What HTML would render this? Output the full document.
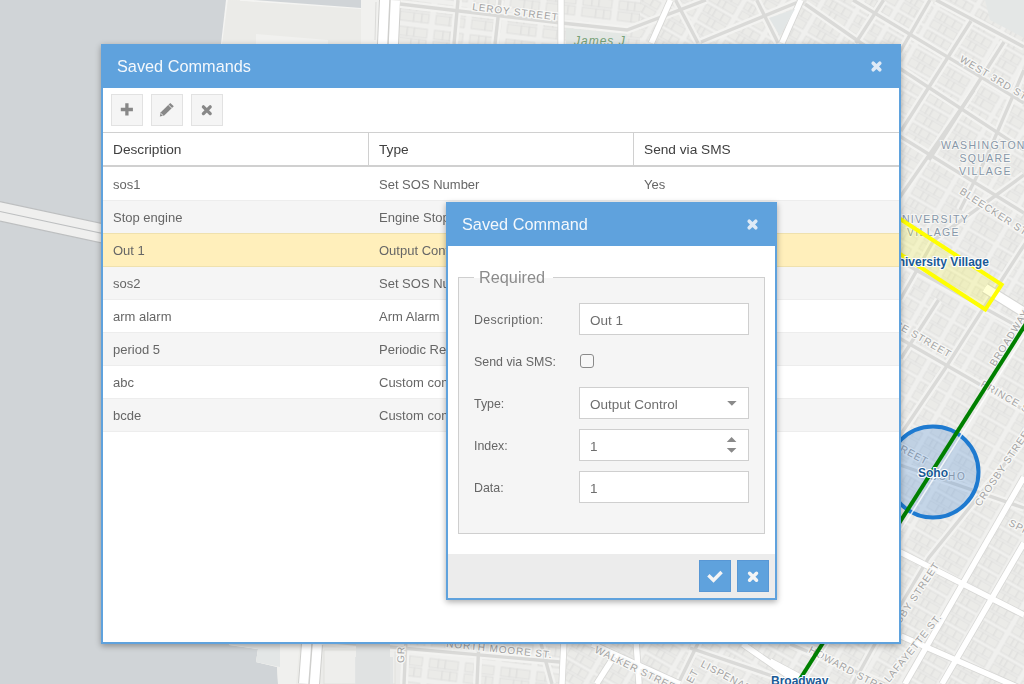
<!DOCTYPE html>
<html><head><meta charset="utf-8">
<style>
*{box-sizing:border-box;margin:0;padding:0}
html,body{width:1024px;height:684px;overflow:hidden;background:#eeeeec;font-family:"Liberation Sans",sans-serif}
#map{position:absolute;left:0;top:0;width:1024px;height:684px}
.win{position:absolute;will-change:transform;background:#fff;border:2px solid #5fa2dd;border-top:0;box-shadow:0 2px 6px rgba(0,0,0,.33)}
.hdr{position:absolute;left:-2px;right:-2px;top:0;height:44px;background:#5fa2dd}
.ttl{position:absolute;color:#f4f8fc;font-size:16.3px;white-space:nowrap;line-height:20px}
.cls{position:absolute;width:11px;height:11px;overflow:visible}
#main{left:101px;top:44px;width:800px;height:600px}
.tb{position:absolute;width:32px;height:32px;top:50px;background:#f5f5f5;border:1px solid #e2e2e2}
.tb svg{position:absolute;left:-1px;top:-1px}
.gh{position:absolute;left:0;right:0;top:88px;height:35px;border-top:1px solid #d0d0d0;border-bottom:2px solid #d0d0d0}
.col{position:absolute;top:0;height:32px;font-size:13.7px;color:#404040;line-height:34px;padding-left:10px;white-space:nowrap}
.sep{position:absolute;top:0;width:1px;height:32px;background:#d0d0d0}
.row{position:absolute;left:0;right:0;height:33px;border-top:1px solid #ededed;font-size:13px;color:#666;white-space:nowrap}
.row span{position:absolute;top:1px;line-height:32px}
.alt{background:#f5f5f5}
.sel{background:#ffefbb;border-top-color:#efe1ae}
.aft{border-top-color:#efe1ae}
.first{border-top-color:#fff}
.last{height:34px;border-bottom:1px solid #ededed}
#dlg{left:446px;top:202px;width:331px;height:398px}
.fs{position:absolute;left:10px;top:75px;width:307px;height:257px;border:1px solid #cfcfcf;background:#f5f5f5}
.lg{position:absolute;left:15px;top:-12px;padding:0 5px;background:transparent;font-size:16.3px;color:#8c8c8c;line-height:22px}
.lgbg{position:absolute;left:15px;top:-1px;width:79px;height:1px;background:#fff}
.lb{position:absolute;left:15px;font-size:12.4px;color:#666;white-space:nowrap;line-height:16px}
.fld{position:absolute;left:120px;width:170px;height:32px;background:#fff;border:1px solid #cfcfcf;font-size:13.5px;color:#6e6e6e;line-height:34px;padding-left:10px}
.ftr{position:absolute;left:0;right:0;bottom:0;height:44px;background:#ececec}
.bb{position:absolute;top:6px;width:32px;height:32px;background:#5fa2dd;border:1px solid #5897d5}
.bb svg{position:absolute;left:-1px;top:-1px}
</style></head><body>
<svg id="map" width="1024" height="684" viewBox="0 0 1024 684">
  <defs>
    <pattern id="bA" width="36" height="26" patternUnits="userSpaceOnUse" patternTransform="rotate(7)">
      <rect width="36" height="26" fill="#f0f0ee"/>
      <g fill="#ebebe8" stroke="#dcdcda" stroke-width="0.7">
        <rect x="3" y="3" width="9" height="9"/><rect x="12" y="3" width="7" height="9"/><rect x="19" y="3" width="13" height="9"/>
        <rect x="3" y="14" width="14" height="9"/><rect x="17" y="14" width="8" height="9"/><rect x="25" y="14" width="7" height="9"/>
      </g>
    </pattern>
    <pattern id="bB" width="34" height="22" patternUnits="userSpaceOnUse" patternTransform="rotate(30)">
      <rect width="34" height="22" fill="#f0f0ee"/>
      <g fill="#ebebe8" stroke="#dcdcda" stroke-width="0.7">
        <rect x="2" y="2" width="6" height="8"/><rect x="8" y="2" width="5" height="8"/><rect x="13" y="2" width="9" height="8"/><rect x="22" y="2" width="8" height="8"/>
        <rect x="2" y="12" width="10" height="8"/><rect x="12" y="12" width="6" height="8"/><rect x="18" y="12" width="12" height="8"/>
      </g>
    </pattern>
    <pattern id="bC" width="30" height="24" patternUnits="userSpaceOnUse" patternTransform="rotate(-58)">
      <rect width="30" height="24" fill="#f0f0ee"/>
      <g fill="#ebebe8" stroke="#dcdcda" stroke-width="0.7">
        <rect x="2" y="2" width="12" height="9"/><rect x="14" y="2" width="13" height="9"/>
        <rect x="2" y="13" width="7" height="9"/><rect x="9" y="13" width="9" height="9"/><rect x="18" y="13" width="9" height="9"/>
      </g>
    </pattern>
  </defs>
  <rect x="0" y="0" width="1024" height="684" fill="#ecece9"/>
  <rect x="400" y="0" width="240" height="44" fill="url(#bA)"/>
  <rect x="640" y="0" width="384" height="44" fill="url(#bB)"/>
  <rect x="880" y="0" width="144" height="684" fill="url(#bB)"/>
  <rect x="406" y="640" width="156" height="44" fill="url(#bA)"/>
  <rect x="322" y="640" width="84" height="44" fill="#ebebe9"/>
  <polygon points="324,650 362,650 362,644 395,646 395,684 324,684" fill="#eeeeec" stroke="#dcdcda" stroke-width="0.7"/>
  <polygon points="355,657 393,657 393,684 355,684" fill="#e2e4e4"/>
  <rect x="562" y="640" width="340" height="44" fill="url(#bB)"/>
  <!-- water -->
  <polygon points="0,0 227,0 222,44 215,300 229,645 258,649 256,662 277,667 278,684 0,684" fill="#d0d4d7"/>
  <polygon points="240,0 361,0 361,9" fill="#d0d4d7"/>
  <polygon points="229,645 258,649 256,662 277,667 278,684 296,684 300,640" fill="#f0f0ee"/>
  <polygon points="228,644 280,644 280,667 256,662 258,649" fill="#e3e6e6"/>
  <path d="M227,0 L222,44" stroke="#f4f4f2" stroke-width="2" fill="none"/>
  <path d="M240,0 L361,9" stroke="#f4f4f2" stroke-width="2" fill="none"/>
  <polygon points="228,0 361,9 361,44 222,44" fill="#ebebe8"/>
  <rect x="361" y="0" width="19" height="44" fill="#f1f1ef"/>
  <path d="M376,2 L375,40" stroke="#dcdcda" stroke-width="1" fill="none"/>
  <polygon points="256,34 328,40 328,44 256,44" fill="#f1f1ef"/>
  <!-- bridge left -->
  <polygon points="0,201.6 230,251 230,270.5 0,221.2" fill="#efefee"/>
  <path d="M0,201.6 L230,251 M0,211.5 L230,260.8 M0,221.2 L230,270.5" stroke="#bdbfc0" stroke-width="1.2" fill="none"/>
  <!-- highway West St -->
  <path d="M390,0 L388,44 L312,644 L309,684" stroke="#cfcfcd" stroke-width="22" fill="none"/>
  <path d="M390,0 L388,44 L312,644 L309,684" stroke="#ffffff" stroke-width="20" fill="none"/>
  <path d="M390,0 L388,44 L312,644 L309,684" stroke="#cfcfcd" stroke-width="1.5" fill="none"/>
  <!-- street casings -->
  <g stroke="#f3f3f1" stroke-width="8" fill="none" id="cas">
    <path d="M400,4 L557,22.5 L627,30 L706,0"/>
    <path d="M458,0 L454,44"/>
    <path d="M500,0 L495,44"/>
    <path d="M675.5,0 L698,43"/>
    <path d="M701,42 L797,2.5"/>
    <path d="M756.7,0 L778,43"/>
    <path d="M805,4 L861,43 L1024,150"/>
    <path d="M853,0 L1024,103"/>
    <path d="M883.6,0 L855.7,43"/>
    <path d="M936,0 L1024,47"/>
    <path d="M930,0 L880,86.5"/>
    <path d="M971,21 L901,131"/>
    <path d="M1004,42 L929,160"/>
    <path d="M1024,70 L987,156 L960,210"/>
    <path d="M974,90 L880,226"/>
    <path d="M880,124 L1024,213"/>
    <path d="M1024,175 L934,240 L900,300"/>
    <path d="M880,327 L1024,410"/>
    <path d="M1030,236 L983,309 L945.5,368 L903,431 L880,470"/>
    <path d="M938.5,300 L901,358.5"/>
    <path d="M1024,440 L928.6,558 L880,640"/>
    <path d="M880,250 L1024,330"/>
    <path d="M900,465 L1024,508"/>
    <path d="M406,640 L404,684"/>
    <path d="M479,640 L477,684"/>
    <path d="M322,641 L560,662"/>
    <path d="M699.6,640 L678,684"/>
    <path d="M690,648 L790,682"/>
    <path d="M790,644 L885,684"/>
    <path d="M876,642 L853,684"/>
    <path d="M540,640 L552,684"/>
  </g>
  <g stroke="#dadad8" stroke-width="3.4" fill="none">
    <path d="M400,4 L557,22.5 L627,30 L706,0"/>
    <path d="M458,0 L454,44"/>
    <path d="M500,0 L495,44"/>
    <path d="M675.5,0 L698,43"/>
    <path d="M701,42 L797,2.5"/>
    <path d="M756.7,0 L778,43"/>
    <path d="M805,4 L861,43 L1024,150"/>
    <path d="M853,0 L1024,103"/>
    <path d="M883.6,0 L855.7,43"/>
    <path d="M936,0 L1024,47"/>
    <path d="M930,0 L880,86.5"/>
    <path d="M971,21 L901,131"/>
    <path d="M1004,42 L929,160"/>
    <path d="M1024,70 L987,156 L960,210"/>
    <path d="M974,90 L880,226"/>
    <path d="M880,124 L1024,213"/>
    <path d="M1024,175 L934,240 L900,300"/>
    <path d="M880,327 L1024,410"/>
    <path d="M1030,236 L983,309 L945.5,368 L903,431 L880,470"/>
    <path d="M938.5,300 L901,358.5"/>
    <path d="M1024,440 L928.6,558 L880,640"/>
    <path d="M880,250 L1024,330"/>
    <path d="M900,465 L1024,508"/>
    <path d="M406,640 L404,684"/>
    <path d="M479,640 L477,684"/>
    <path d="M322,641 L560,662"/>
    <path d="M699.6,640 L678,684"/>
    <path d="M690,648 L790,682"/>
    <path d="M790,644 L885,684"/>
    <path d="M876,642 L853,684"/>
    <path d="M540,640 L552,684"/>
  </g>
  <!-- white roads -->
  <g stroke="#d6d6d4" stroke-width="7" fill="none">
    <path d="M985,288 L1030,316" stroke-width="11"/>
    <path d="M561,0 L561,44"/><path d="M670.5,0 L651.4,43"/><path d="M801,0 L782,43"/>
    <path d="M985,288 L1030,316"/><path d="M900,552 L1024,615"/><path d="M1024,477 L905,684"/>
    <path d="M1024,543 L942,684"/><path d="M901,636 L1024,690"/><path d="M564,640 L562,684"/><path d="M592,644 L680,684"/><path d="M613.7,657 L596.5,684"/><path d="M636,640 L639,684"/><path d="M742.6,644 L800,684"/><path d="M770,661 L802,678"/>
  </g>
  <g stroke="#ffffff" stroke-width="5.5" fill="none">
    <path d="M985,288 L1030,316" stroke-width="9"/>
    <path d="M561,0 L561,44"/><path d="M670.5,0 L651.4,43"/><path d="M801,0 L782,43"/>
    <path d="M985,288 L1030,316"/><path d="M900,552 L1024,615"/><path d="M1024,477 L905,684"/>
    <path d="M1024,543 L942,684"/><path d="M901,636 L1024,690"/><path d="M564,640 L562,684"/><path d="M592,644 L680,684"/><path d="M613.7,657 L596.5,684"/><path d="M636,640 L639,684"/><path d="M742.6,644 L800,684"/><path d="M770,661 L802,678"/>
  </g>
  <!-- parks -->
  <polygon points="985,0 1024,0 1024,38 990,20" fill="#e4e7e6"/>
  <polygon points="566,28 627,34 627,44 566,44" fill="#e3e7e4"/>
  <polygon points="769,18 795,9 780,35.5" fill="#e2e6e6"/>
  <polygon points="356,644 390,644 390,684 356,684" fill="#e0e2e2"/>
  <!-- labels -->
  <g font-family="Liberation Sans" fill="#a3a3a3" stroke="#f8f8f6" stroke-width="2.5" paint-order="stroke" font-size="10" letter-spacing="0.9">
    <text x="472" y="10" transform="rotate(7 472 10)">LEROY STREET</text>
    <text x="959" y="61" transform="rotate(31 959 61)">WEST 3RD STREET</text>
    <text x="959" y="193" transform="rotate(33 959 193)">BLEECKER STREET</text>
    <text x="949" y="358" text-anchor="end" transform="rotate(30 949 358)">PRINCE STREET</text>
    <text x="980" y="386" transform="rotate(30 980 386)">PRINCE STREET</text>
    <text x="995" y="367" transform="rotate(-58 995 367)">BROADWAY</text>
    <text x="980" y="507" transform="rotate(-56 980 507)">CROSBY STREET</text>
    <text x="940" y="565" text-anchor="end" transform="rotate(-56 940 565)">CROSBY STREET</text>
    <text x="1008" y="525" transform="rotate(28 1008 525)">SPRING</text>
    <text x="926" y="465" text-anchor="end" transform="rotate(28 926 465)">PRINCE STREET</text>
    <text x="930" y="480" letter-spacing="1.8">SOHO</text>
    <text x="446" y="647" transform="rotate(6 446 647)">NORTH MOORE ST.</text>
    <text x="594" y="652" transform="rotate(26 594 652)">WALKER STREET</text>
    <text x="700" y="666" transform="rotate(28 700 666)">LISPENARD</text>
    <text x="808" y="652" transform="rotate(28 808 652)">HOWARD STREET</text>
    <text x="889" y="683" transform="rotate(-51 889 683)">LAFAYETTE ST.</text><text x="692" y="684" transform="rotate(-62 692 684)">ET</text>
    <text x="404" y="663" transform="rotate(-88 404 663)">GR</text>
  </g>
  <g font-family="Liberation Sans" fill="#8797a8" stroke="#f6f6f4" stroke-width="2" paint-order="stroke" font-size="10.5" letter-spacing="1.3">
    <text x="941" y="148.5">WASHINGTON</text>
    <text x="959.5" y="161.5">SQUARE</text>
    <text x="959" y="174.5">VILLAGE</text>
    <text x="893" y="223">UNIVERSITY</text>
    <text x="907" y="236">VILLAGE</text>
  </g>
  <text x="574" y="45" font-family="Liberation Sans" font-style="italic" font-size="12" fill="#76a176" letter-spacing="1">James J</text>
  <!-- overlays -->
  <polygon points="860,193 1001.6,284.6 985.3,309.5 860,228" fill="rgba(255,255,0,0.17)" stroke="#ffff00" stroke-width="4"/>
  <circle cx="933" cy="472" r="45.5" fill="rgba(40,120,210,0.22)" stroke="#1e7ad0" stroke-width="4"/>
  <path d="M1047,300 L793,700" stroke="#ffffff" stroke-width="1.5" fill="none" opacity="0.8"/><path d="M1041,300 L786.7,700" stroke="#008000" stroke-width="4" fill="none"/>
  <g font-family="Liberation Sans" font-weight="bold" fill="#1a5a96" stroke="#ffffff" stroke-width="2" paint-order="stroke" font-size="12">
    <text x="889" y="266">University Village</text>
    <text x="918" y="477">Soho</text>
    <text x="771" y="685">Broadway</text>
  </g>
</svg>

<div class="win" id="main">
  <div class="hdr">
    <div class="ttl" style="left:16px;top:12px">Saved Commands</div>
    <svg class="cls" style="left:770.2px;top:17.2px" viewBox="0 0 11 11"><path d="M2.2 2.2 L8.8 8.8 M8.8 2.2 L2.2 8.8" stroke="#dfeaf6" stroke-width="3.6" stroke-linecap="round"/></svg>
  </div>
  <div class="tb" style="left:8px"><svg width="32" height="32" viewBox="0 0 32 32"><path d="M15.9 9.2 V21.4 M9.8 15.5 H21.9" stroke="#888" stroke-width="3.3" stroke-linejoin="round"/></svg></div>
  <div class="tb" style="left:48px"><svg width="32" height="32" viewBox="0 0 32 32"><path d="M8.8 22.5 L9.8 18.2 L19.3 9.1 L22.8 12.3 L13.2 21.6 Z" fill="#888"/><path d="M17.5 11 L20.9 14.2" stroke="#f5f5f5" stroke-width="0.9"/><path d="M10 19.6 L12.1 21.5" stroke="#f5f5f5" stroke-width="0.9"/></svg></div>
  <div class="tb" style="left:88px"><svg width="32" height="32" viewBox="0 0 32 32"><path d="M12.4 12.8 L19.2 19.6 M19.2 12.8 L12.4 19.6" stroke="#888" stroke-width="3.3" stroke-linecap="round"/></svg></div>
  <div class="gh">
    <div class="col" style="left:0">Description</div>
    <div class="sep" style="left:265px"></div>
    <div class="col" style="left:266px">Type</div>
    <div class="sep" style="left:530px"></div>
    <div class="col" style="left:531px">Send via SMS</div>
  </div>
  <div class="row first" style="top:123px"><span style="left:10px">sos1</span><span style="left:276px">Set SOS Number</span><span style="left:541px">Yes</span></div>
  <div class="row alt" style="top:156px"><span style="left:10px">Stop engine</span><span style="left:276px">Engine Stop</span></div>
  <div class="row sel" style="top:189px"><span style="left:10px">Out 1</span><span style="left:276px">Output Control</span></div>
  <div class="row alt aft" style="top:222px"><span style="left:10px">sos2</span><span style="left:276px">Set SOS Number</span></div>
  <div class="row" style="top:255px"><span style="left:10px">arm alarm</span><span style="left:276px">Arm Alarm</span></div>
  <div class="row alt" style="top:288px"><span style="left:10px">period 5</span><span style="left:276px">Periodic Reporting</span></div>
  <div class="row" style="top:321px"><span style="left:10px">abc</span><span style="left:276px">Custom command</span></div>
  <div class="row alt last" style="top:354px"><span style="left:10px">bcde</span><span style="left:276px">Custom command</span></div>
</div>

<div class="win" id="dlg">
  <div class="hdr">
    <div class="ttl" style="left:16px;top:12px">Saved Command</div>
    <svg class="cls" style="left:301.2px;top:17.2px" viewBox="0 0 11 11"><path d="M2.2 2.2 L8.8 8.8 M8.8 2.2 L2.2 8.8" stroke="#dfeaf6" stroke-width="3.6" stroke-linecap="round"/></svg>
  </div>
  <div class="fs">
    <div class="lgbg"></div>
    <div class="lg">Required</div>
    <div class="lb" style="top:34px;letter-spacing:0.35px">Description:</div>
    <div class="fld" style="top:25px">Out 1</div>
    <div class="lb" style="top:76px">Send via SMS:</div>
    <div style="position:absolute;left:121px;top:76px;width:14px;height:14px;border:1.4px solid #8a8a8a;border-radius:3px;background:#f7f7f7"></div>
    <div class="lb" style="top:118px">Type:</div>
    <div class="fld" style="top:109px">Output Control<svg style="position:absolute;left:-1px;top:-1px" width="170" height="32"><path d="M148.2 14 H157.6 L152.9 18.8 Z" fill="#8a8a8a"/></svg></div>
    <div class="lb" style="top:160px">Index:</div>
    <div class="fld" style="top:151px">1<svg style="position:absolute;left:-1px;top:-1px" width="170" height="32"><path d="M147.8 12.9 H157.4 L152.6 8 Z M147.8 19 H157.4 L152.6 23.8 Z" fill="#8a8a8a"/></svg></div>
    <div class="lb" style="top:202px">Data:</div>
    <div class="fld" style="top:193px">1</div>
  </div>
  <div class="ftr">
    <div class="bb" style="left:251px"><svg width="32" height="32"><path d="M10.6 16.5 L14.5 20.3 L21.4 13.2" stroke="#f5f5f5" stroke-width="3.4" fill="none" stroke-linecap="square"/></svg></div>
    <div class="bb" style="left:289px"><svg width="32" height="32"><path d="M12.6 13.3 L19.5 20.2 M19.5 13.3 L12.6 20.2" stroke="#f5f5f5" stroke-width="3.5" stroke-linecap="round"/></svg></div>
  </div>
</div>
</body></html>
